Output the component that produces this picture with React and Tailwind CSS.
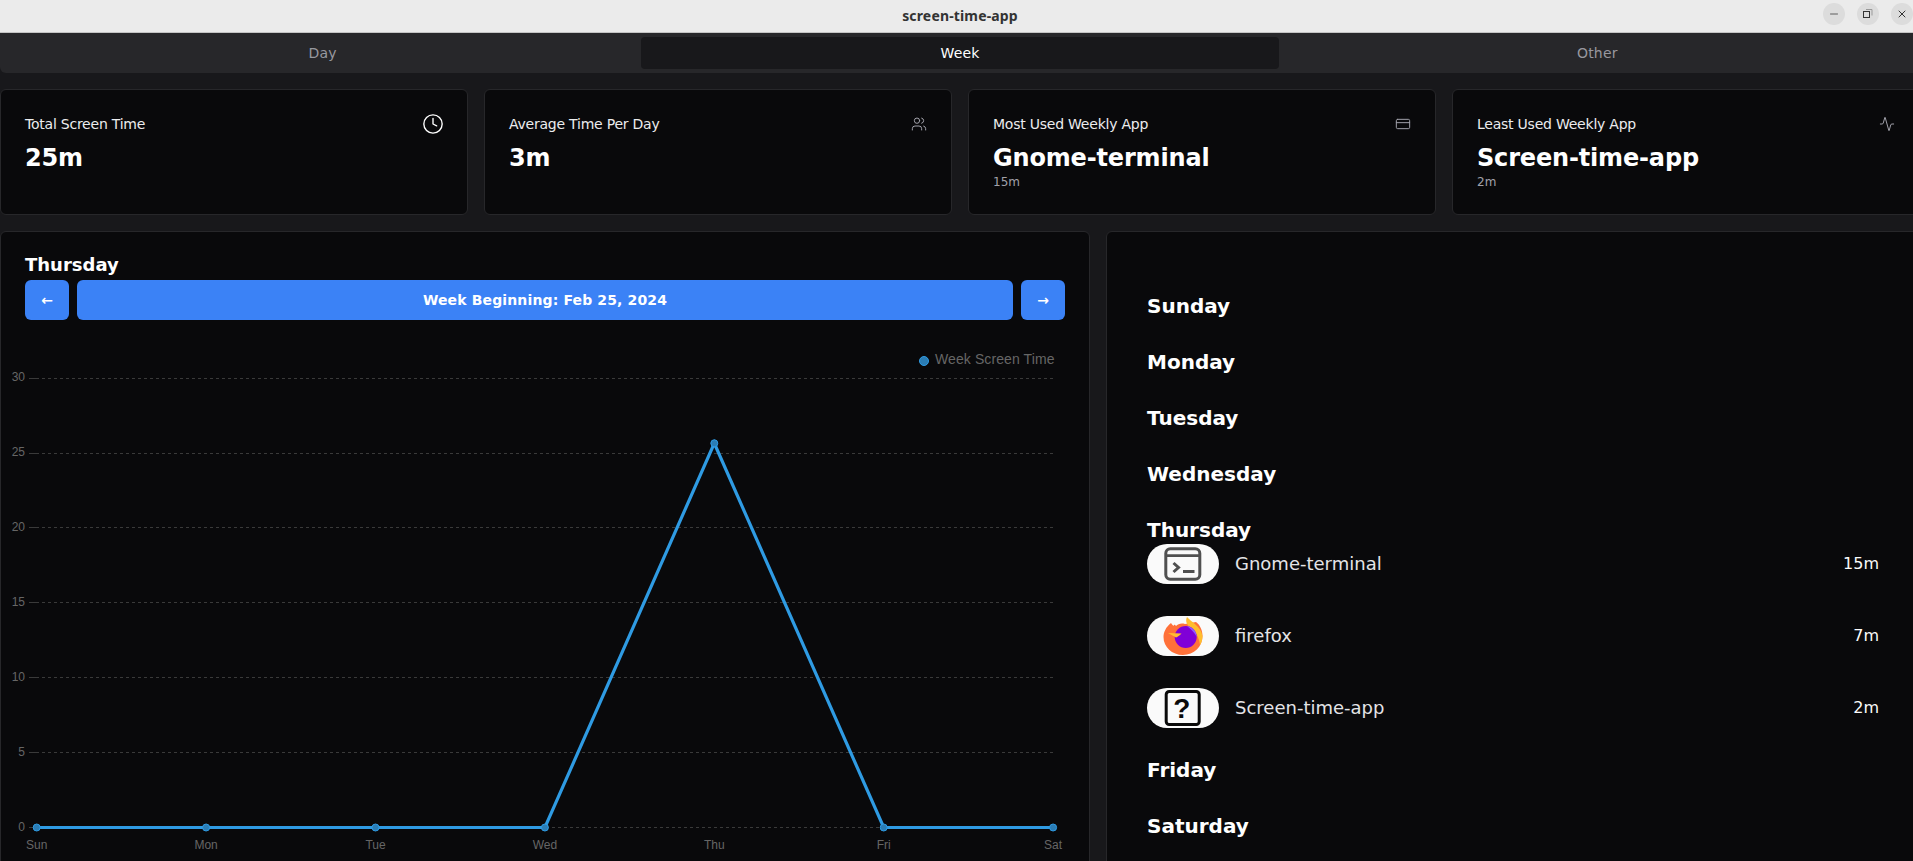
import { Clock, Users, CreditCard, Activity, Minus, X } from 'lucide-react'

const UI = "font-['DejaVu_Sans',sans-serif]"

const stats = [
  { label: 'Total Screen Time', value: '25m', icon: <Clock size={22} strokeWidth={1.5} className="-mr-px text-white" /> },
  { label: 'Average Time Per Day', value: '3m', icon: <Users size={16} strokeWidth={1.5} className="text-[#a1a1aa]" /> },
  { label: 'Most Used Weekly App', value: 'Gnome-terminal', sub: '15m', icon: <CreditCard size={16} strokeWidth={1.5} className="text-[#a1a1aa]" /> },
  { label: 'Least Used Weekly App', value: 'Screen-time-app', sub: '2m', icon: <Activity size={16} strokeWidth={1.5} className="text-[#a1a1aa]" /> },
]

const apps = [
  { name: 'Gnome-terminal', time: '15m', icon: <TerminalIcon /> },
  { name: 'firefox', time: '7m', icon: <FirefoxIcon /> },
  { name: 'Screen-time-app', time: '2m', icon: <UnknownIcon /> },
]

const days = ['Sunday', 'Monday', 'Tuesday', 'Wednesday', 'Thursday', 'Friday', 'Saturday']

export default function App() {
  return (
    <div className={`h-[861px] w-[1913px] overflow-hidden bg-[#18181b] text-white ${UI}`}>
      <div className="w-[1920px]">
        <TitleBar />
        <div className="flex h-10 items-center rounded-b-md bg-[#27272a] p-1 text-sm tracking-[0.15px]">
          <div className="flex-1 text-center text-[#98989f]">Day</div>
          <div className="flex h-8 flex-1 items-center justify-center rounded-sm bg-[#18181b]">Week</div>
          <div className="flex-1 text-center text-[#98989f]">Other</div>
        </div>

        <div className="mt-4 grid grid-cols-4 gap-4">
          {stats.map(s => <StatCard key={s.label} {...s} />)}
        </div>

        <div className="mt-4 grid grid-cols-[1090px_1fr] gap-4">
          <section className="h-[640px] rounded-t-md border border-[#27272a] bg-[#09090b]">
            <div className="px-6 pt-[18px]">
              <h3 className="text-lg leading-[30px] font-bold">Thursday</h3>
              <div className="flex gap-2">
                <button className="h-10 w-11 rounded-md bg-[#3b82f6] text-sm font-bold">←</button>
                <button className="h-10 flex-1 rounded-md bg-[#3b82f6] text-sm font-bold tracking-[0.14px]">Week Beginning: Feb 25, 2024</button>
                <button className="h-10 w-11 rounded-md bg-[#3b82f6] text-sm font-bold">→</button>
              </div>
            </div>
            <WeekChart />
          </section>

          <section className="h-[640px] rounded-t-md border border-[#27272a] bg-[#09090b] px-10 pt-[60px]">
            <div className="flex flex-col gap-7">
              {days.map(d => (
                <div key={d}>
                  <h3 className="text-xl leading-7 font-bold">{d}</h3>
                  {d === 'Thursday' && (
                    <div className="flex flex-col gap-8">
                      {apps.map(a => <AppRow key={a.name} {...a} />)}
                    </div>
                  )}
                </div>
              ))}
            </div>
          </section>
        </div>
      </div>
    </div>
  )
}

function TitleBar() {
  return (
    <div className="relative flex h-[33px] items-center justify-center border-b border-[#c4c4c4] bg-[#ebebeb]">
      <span className="font-['Noto_Sans',sans-serif] text-sm font-bold tracking-[0.15px] text-[#333333]">screen-time-app</span>
      <div className="absolute top-[3px] right-[7px] flex gap-3">
        <WinButton><Minus size={12} strokeWidth={1.5} /></WinButton>
        <WinButton>
          <svg width="12" height="12" viewBox="0 0 12 12" fill="none">
            <rect x="1.5" y="3.5" width="6" height="6" stroke="#333" />
            <path d="M4 1.5h6v6" stroke="#999" />
          </svg>
        </WinButton>
        <WinButton><X size={12} strokeWidth={2} /></WinButton>
      </div>
    </div>
  )
}

function WinButton({ children }) {
  return <div className="flex h-[22px] w-[22px] items-center justify-center rounded-full bg-[#dcdcdc] text-[#333333]">{children}</div>
}

function StatCard({ label, value, sub, icon }) {
  return (
    <div className="h-[126px] rounded-md border border-[#27272a] bg-[#09090b] p-6">
      <div className="flex h-5 items-center justify-between">
        <span className="text-sm tracking-[-0.23px] text-[#ececee]">{label}</span>
        {icon}
      </div>
      <div className="mt-2 text-2xl leading-8 font-bold tracking-[-0.17px]">{value}</div>
      {sub && <div className="text-xs leading-4 text-[#a1a1aa]">{sub}</div>}
    </div>
  )
}

function AppRow({ name, time, icon }) {
  return (
    <div className="flex items-center">
      <div className="flex h-10 w-[72px] items-center justify-center rounded-full bg-[#fafafa]">{icon}</div>
      <span className="ml-4 text-lg text-[#e4e4e7]">{name}</span>
      <span className="ml-auto text-base text-[#fafafa]">{time}</span>
    </div>
  )
}

function TerminalIcon() {
  return (
    <svg width="38" height="36" viewBox="0 0 38 36" fill="none" stroke="#505050">
      <rect x="1.8" y="2.8" width="34" height="30.4" rx="4.5" strokeWidth="3" />
      <path d="M2 9.7h34" strokeWidth="2.8" />
      <path d="M9.5 17l5 4.5-5 4.5" strokeWidth="3" />
      <path d="M19 25.5h11.5" strokeWidth="3" />
    </svg>
  )
}

function UnknownIcon() {
  return (
    <svg width="38" height="38" viewBox="0 0 38 38" fill="none">
      <rect x="2.2" y="2.5" width="33" height="33" rx="3" stroke="#0a0a0a" strokeWidth="3" />
      <text x="17.8" y="29.3" textAnchor="middle" fontFamily="Liberation Sans" fontWeight="700" fontSize="28" fill="#0a0a0a">?</text>
    </svg>
  )
}

function FirefoxIcon() {
  return (
    <svg width="40" height="40" viewBox="0 0 40 40">
      <path d="M8 7C3 11 .5 16 .5 21C.5 31 9 39 20 39C31 39 39.5 30.5 39.5 20C39.5 14 37 9 33 6L22 8C18 7 15 8 13 10C12 9 11 8 10.5 10C9.5 9 8.5 8 8 7Z" fill="#ff7139" />
      <path d="M24 1C28 6 38 10 39.5 20C39.5 23 38.5 27 37 29C36 21 32 14 27 11C24 9 22 5 24 1Z" fill="#ffbd2e" />
      <circle cx="22.7" cy="21" r="11" fill="#8000d7" />
      <path d="M24 10C30 11 34 16 33.7 21C32 17 28 13 24 10Z" fill="#9059ff" />
      <path d="M5 17L18.500 17.500C16.500 19.500 14.500 21 13 21.500C11 20 8 19 5 17Z" fill="#ffbd2e" />
    </svg>
  )
}

const yTicks = [30, 25, 20, 15, 10, 5, 0]
const xLabels = ['Sun', 'Mon', 'Tue', 'Wed', 'Thu', 'Fri', 'Sat']
const values = [0, 0, 0, 0, 25.65, 0, 0]

// chart drawn in page coordinates, viewBox is offset to where the svg lands
function WeekChart() {
  const x = i => 36.7 + i * 169.4
  const y = v => 827.5 - v * 14.98
  const grid = v => Math.floor(y(v)) + 0.5
  const pts = values.map((v, i) => `${x(i)},${y(v)}`).join(' ')
  return (
    <svg className="mt-4 block" width="1088" height="525" viewBox="1 336 1088 525" fontFamily="Liberation Sans" fontSize="12" fill="#666666">
      <circle cx="924" cy="361" r="4.5" fill="#2b7db5" stroke="#2f9be3" />
      <text x="935" y="364" fontSize="14" letterSpacing="0.1">Week Screen Time</text>
      {yTicks.map(t => (
        <g key={t}>
          <path d={`M29 ${grid(t)}H36`} stroke="#3a3a3a" />
          <path d={`M36 ${grid(t)}H1053`} stroke="#3a3a3a" strokeDasharray="3 3" />
          <text x="25" y={y(t) + 3} textAnchor="end">{t}</text>
        </g>
      ))}
      {xLabels.map((l, i) => <text key={l} x={x(i)} y="849" textAnchor="middle">{l}</text>)}
      <polyline points={pts} fill="none" stroke="#2f9be3" strokeWidth="3.2" />
      {values.map((v, i) => <circle key={i} cx={x(i)} cy={y(v)} r="3.500" fill="#2b7db5" stroke="#2f9be3" />)}
    </svg>
  )
}
